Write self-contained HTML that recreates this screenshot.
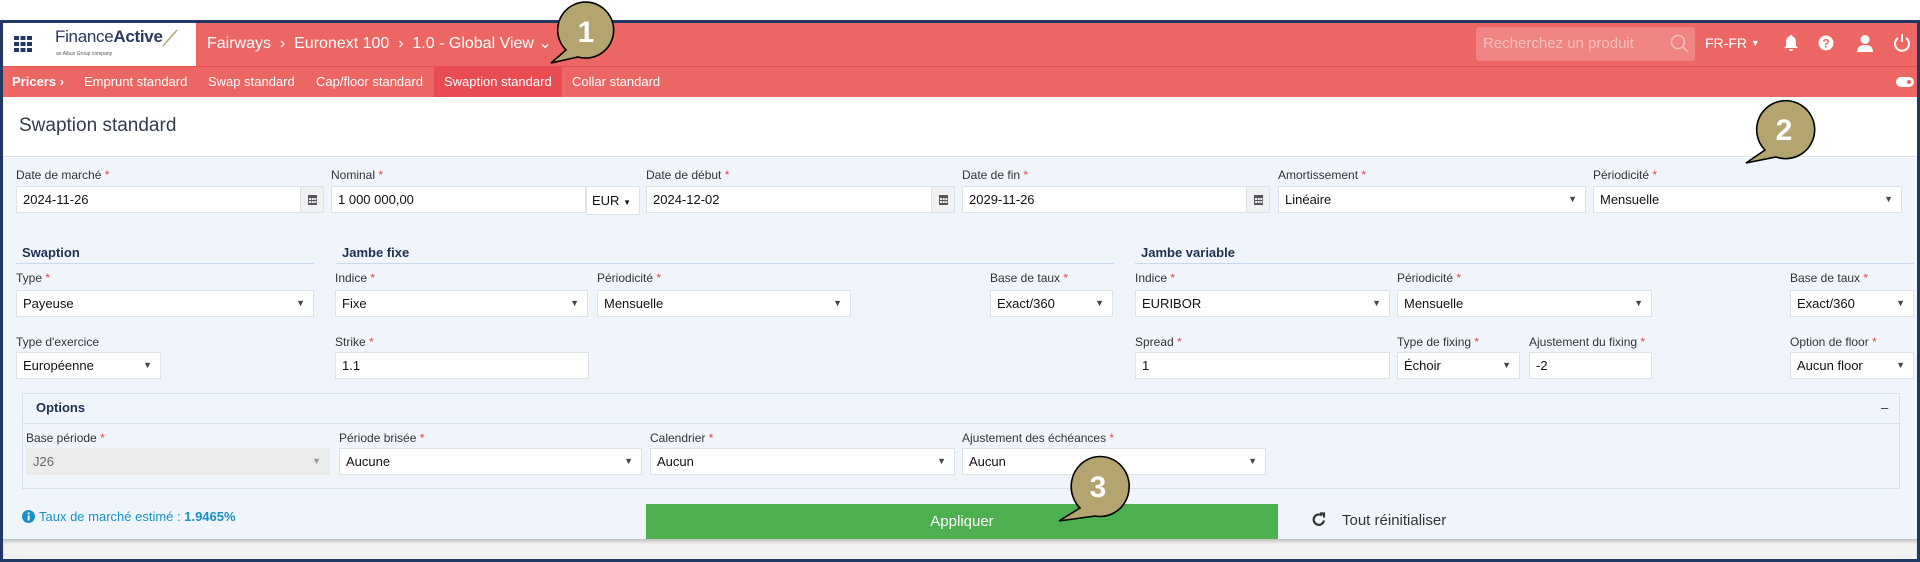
<!DOCTYPE html>
<html><head><meta charset="utf-8"><style>
*{box-sizing:border-box;margin:0;padding:0}
body{width:1920px;height:562px;background:#fff;font-family:"Liberation Sans",Arial,sans-serif;position:relative;overflow:hidden}
.a{position:absolute}
.frame{left:0;top:20px;width:1920px;height:542px;border:3px solid #1f3864;border-top:3px solid #1f3864}
.lbl{position:absolute;font-size:12px;color:#333;white-space:nowrap}
.lbl i{color:#e8474c;font-style:normal}
.inp{position:absolute;height:27px;background:#fff;border:1px solid #dde2e8;font-size:13px;color:#111;padding-left:6px;line-height:25px;white-space:nowrap}
.inp .ar{position:absolute;right:8px;top:0;font-size:9px;color:#444}
.cal{position:absolute;right:0;top:0;width:23px;height:25px;background:#f0f1f3;border-left:1px solid #dde2e8}
.sec{position:absolute;font-size:13px;font-weight:bold;color:#1f3050;border-bottom:1px solid #c9d9ef;padding:0 0 4px 6px;height:19px}
.nav{position:absolute;top:66px;height:31px;line-height:31px;color:#fff;font-size:13px}
</style></head><body>
<!-- header -->
<div class="a" style="left:0;top:21px;width:1920px;height:45px;background:#ec6663"></div>
<div class="a" style="left:3px;top:22px;width:193px;height:44px;background:#fff"></div>
<svg class="a" style="left:14px;top:36px" width="18" height="16"><g fill="#1f3864"><rect x="0" y="0" width="5" height="4"/><rect x="6.5" y="0" width="5" height="4"/><rect x="13" y="0" width="5" height="4"/><rect x="0" y="6" width="5" height="4"/><rect x="6.5" y="6" width="5" height="4"/><rect x="13" y="6" width="5" height="4"/><rect x="0" y="12" width="5" height="4"/><rect x="6.5" y="12" width="5" height="4"/><rect x="13" y="12" width="5" height="4"/></g></svg>
<div class="a" style="left:55px;top:27px;font-size:17px;color:#2a3a5e;letter-spacing:-0.3px">Finance<b>Active</b></div>
<svg class="a" style="left:162px;top:29px" width="16" height="18"><line x1="1" y1="17" x2="15" y2="1" stroke="#b4a46f" stroke-width="1.5"/></svg>
<div class="a" style="left:56px;top:51px;font-size:5px;color:#555">an Aibus Group company</div>
<div class="a" style="left:207px;top:33px;font-size:16px;color:#fff;white-space:nowrap">Fairways&nbsp;&nbsp;›&nbsp;&nbsp;Euronext 100&nbsp;&nbsp;›&nbsp;&nbsp;1.0 - Global View&nbsp;⌄</div>
<div class="a" style="left:1476px;top:27px;width:219px;height:34px;background:#f08482;border-radius:3px"></div>
<div class="a" style="left:1483px;top:35px;font-size:15px;color:#f6c0bf">Recherchez un produit</div>
<svg class="a" style="left:1670px;top:34px" width="20" height="20"><circle cx="8" cy="8" r="6.5" fill="none" stroke="#f6c0bf" stroke-width="1.5"/><line x1="13" y1="13" x2="18" y2="18" stroke="#f6c0bf" stroke-width="1.5"/></svg>
<div class="a" style="left:1705px;top:35px;font-size:14px;color:#fff">FR-FR <span style="font-size:9px;vertical-align:2px">▼</span></div>
<svg class="a" style="left:1783px;top:34px" width="16" height="18" fill="#fff"><path d="M8 1a1.5 1.5 0 0 1 1.5 1.5C12.5 3.3 13 6 13 9v3l2 2H1l2-2V9c0-3 .5-5.7 3.5-6.5A1.5 1.5 0 0 1 8 1zM6 15h4a2 2 0 0 1-4 0z"/></svg>
<svg class="a" style="left:1818px;top:35px" width="16" height="16"><circle cx="8" cy="8" r="7.5" fill="#fff"/><text x="8" y="12.5" font-size="12" font-weight="bold" text-anchor="middle" fill="#ec6663" font-family="Liberation Sans">?</text></svg>
<svg class="a" style="left:1856px;top:34px" width="18" height="18" fill="#fff"><circle cx="9" cy="5.5" r="4.5"/><path d="M1 18c0-5 3-7 8-7s8 2 8 7z"/></svg>
<svg class="a" style="left:1893px;top:33px" width="18" height="19" fill="none" stroke="#fff" stroke-width="2"><path d="M5 5a7 7 0 1 0 8 0"/><line x1="9" y1="1" x2="9" y2="9"/></svg>
<!-- subnav -->
<div class="a" style="left:0;top:66px;width:1920px;height:31px;background:#ec6663;border-top:1px solid #e5504f"></div>
<div class="a" style="left:434px;top:67px;width:128px;height:30px;background:#e84c51"></div>
<div class="nav" style="left:12px;font-weight:bold">Pricers ›</div>
<div class="nav" style="left:84px">Emprunt standard</div>
<div class="nav" style="left:208px">Swap standard</div>
<div class="nav" style="left:316px">Cap/floor standard</div>
<div class="nav" style="left:444px">Swaption standard</div>
<div class="nav" style="left:572px">Collar standard</div>
<div class="a" style="left:1896px;top:77px;width:18px;height:10px;background:#fff;border-radius:5px"><div style="position:absolute;right:3px;top:3px;width:4px;height:4px;border-radius:2px;background:#ec6663"></div></div>
<!-- title -->
<div class="a" style="left:3px;top:97px;width:1914px;height:60px;background:#fff;border-bottom:1px solid #dde3ea"></div>
<div class="a" style="left:19px;top:115px;font-size:19px;color:#333c4e">Swaption standard</div>
<!-- content -->
<div class="a" style="left:3px;top:158px;width:1914px;height:381px;background:#f0f5fc"></div>
<div class="a" style="left:3px;top:539px;width:1914px;height:20px;background:#f2f2f2;box-shadow:inset 0 4px 4px -2px rgba(0,0,0,.25)"></div>

<div class="lbl" style="left:16px;top:168px">Date de marché <i>*</i></div>
<div class="inp" style="left:16px;top:186px;width:308px">2024-11-26<div class="cal"><svg width="23" height="25"><g fill="#555"><rect x="7" y="8" width="9" height="10"/></g><g fill="#f0f1f3"><rect x="8" y="11" width="2" height="2"/><rect x="10.7" y="11" width="2" height="2"/><rect x="13.3" y="11" width="2" height="2"/><rect x="8" y="14" width="2" height="2"/><rect x="10.7" y="14" width="2" height="2"/><rect x="13.3" y="14" width="2" height="2"/></g></svg></div></div>
<div class="lbl" style="left:331px;top:168px">Nominal <i>*</i></div>
<div class="inp" style="left:331px;top:186px;width:255px">1 000 000,00</div>
<div class="inp" style="left:586px;top:186px;width:54px;height:29px;line-height:28px;padding-left:5px">EUR <span style="font-size:8px">▼</span></div>
<div class="lbl" style="left:646px;top:168px">Date de début <i>*</i></div>
<div class="inp" style="left:646px;top:186px;width:309px">2024-12-02<div class="cal"><svg width="23" height="25"><g fill="#555"><rect x="7" y="8" width="9" height="10"/></g><g fill="#f0f1f3"><rect x="8" y="11" width="2" height="2"/><rect x="10.7" y="11" width="2" height="2"/><rect x="13.3" y="11" width="2" height="2"/><rect x="8" y="14" width="2" height="2"/><rect x="10.7" y="14" width="2" height="2"/><rect x="13.3" y="14" width="2" height="2"/></g></svg></div></div>
<div class="lbl" style="left:962px;top:168px">Date de fin <i>*</i></div>
<div class="inp" style="left:962px;top:186px;width:308px">2029-11-26<div class="cal"><svg width="23" height="25"><g fill="#555"><rect x="7" y="8" width="9" height="10"/></g><g fill="#f0f1f3"><rect x="8" y="11" width="2" height="2"/><rect x="10.7" y="11" width="2" height="2"/><rect x="13.3" y="11" width="2" height="2"/><rect x="8" y="14" width="2" height="2"/><rect x="10.7" y="14" width="2" height="2"/><rect x="13.3" y="14" width="2" height="2"/></g></svg></div></div>
<div class="lbl" style="left:1278px;top:168px">Amortissement <i>*</i></div>
<div class="inp" style="left:1278px;top:186px;width:308px">Linéaire<span class="ar">▼</span></div>
<div class="lbl" style="left:1593px;top:168px">Périodicité <i>*</i></div>
<div class="inp" style="left:1593px;top:186px;width:309px">Mensuelle<span class="ar">▼</span></div>

<div class="sec" style="left:16px;top:245px;width:298px">Swaption</div>
<div class="sec" style="left:336px;top:245px;width:778px">Jambe fixe</div>
<div class="sec" style="left:1135px;top:245px;width:779px">Jambe variable</div>

<div class="lbl" style="left:16px;top:271px">Type <i>*</i></div>
<div class="inp" style="left:16px;top:290px;width:298px">Payeuse<span class="ar">▼</span></div>
<div class="lbl" style="left:335px;top:271px">Indice <i>*</i></div>
<div class="inp" style="left:335px;top:290px;width:253px">Fixe<span class="ar">▼</span></div>
<div class="lbl" style="left:597px;top:271px">Périodicité <i>*</i></div>
<div class="inp" style="left:597px;top:290px;width:254px">Mensuelle<span class="ar">▼</span></div>
<div class="lbl" style="left:990px;top:271px">Base de taux <i>*</i></div>
<div class="inp" style="left:990px;top:290px;width:123px">Exact/360<span class="ar">▼</span></div>
<div class="lbl" style="left:1135px;top:271px">Indice <i>*</i></div>
<div class="inp" style="left:1135px;top:290px;width:255px">EURIBOR<span class="ar">▼</span></div>
<div class="lbl" style="left:1397px;top:271px">Périodicité <i>*</i></div>
<div class="inp" style="left:1397px;top:290px;width:255px">Mensuelle<span class="ar">▼</span></div>
<div class="lbl" style="left:1790px;top:271px">Base de taux <i>*</i></div>
<div class="inp" style="left:1790px;top:290px;width:124px">Exact/360<span class="ar">▼</span></div>

<div class="lbl" style="left:16px;top:335px">Type d'exercice</div>
<div class="inp" style="left:16px;top:352px;width:145px">Européenne<span class="ar">▼</span></div>
<div class="lbl" style="left:335px;top:335px">Strike <i>*</i></div>
<div class="inp" style="left:335px;top:352px;width:254px">1.1</div>
<div class="lbl" style="left:1135px;top:335px">Spread <i>*</i></div>
<div class="inp" style="left:1135px;top:352px;width:255px">1</div>
<div class="lbl" style="left:1397px;top:335px">Type de fixing <i>*</i></div>
<div class="inp" style="left:1397px;top:352px;width:123px">Échoir<span class="ar">▼</span></div>
<div class="lbl" style="left:1529px;top:335px">Ajustement du fixing <i>*</i></div>
<div class="inp" style="left:1529px;top:352px;width:123px">-2</div>
<div class="lbl" style="left:1790px;top:335px">Option de floor <i>*</i></div>
<div class="inp" style="left:1790px;top:352px;width:124px">Aucun floor<span class="ar">▼</span></div>

<div class="a" style="left:22px;top:393px;width:1878px;height:96px;border:1px solid #d6e2f0"></div>
<div class="a" style="left:23px;top:423px;width:1876px;height:1px;background:#d6e2f0"></div>
<div class="a" style="left:36px;top:400px;font-size:13px;font-weight:bold;color:#1f3050">Options</div>
<div class="a" style="left:1881px;top:400px;font-size:13px;color:#333">–</div>
<div class="lbl" style="left:26px;top:431px">Base période <i>*</i></div>
<div class="inp" style="left:26px;top:448px;width:304px;background:#ebebeb;border-color:#ebebeb;color:#666">J26<span class="ar" style="color:#999">▼</span></div>
<div class="lbl" style="left:339px;top:431px">Période brisée <i>*</i></div>
<div class="inp" style="left:339px;top:448px;width:303px">Aucune<span class="ar">▼</span></div>
<div class="lbl" style="left:650px;top:431px">Calendrier <i>*</i></div>
<div class="inp" style="left:650px;top:448px;width:305px">Aucun<span class="ar">▼</span></div>
<div class="lbl" style="left:962px;top:431px">Ajustement des échéances <i>*</i></div>
<div class="inp" style="left:962px;top:448px;width:304px">Aucun<span class="ar">▼</span></div>

<svg class="a" style="left:22px;top:510px" width="13" height="13"><circle cx="6.5" cy="6.5" r="6.5" fill="#1a8fc8"/><rect x="5.7" y="5.5" width="1.8" height="5" fill="#fff"/><rect x="5.7" y="2.5" width="1.8" height="1.8" fill="#fff"/></svg>
<div class="a" style="left:39px;top:509px;font-size:13px;color:#1a8fc8">Taux de marché estimé : <b>1.9465%</b></div>
<div class="a" style="left:646px;top:504px;width:632px;height:35px;background:#4caf50;color:#fff;font-size:15px;text-align:center;line-height:35px">Appliquer</div>
<svg class="a" style="left:1311px;top:512px" width="16" height="16" fill="none" stroke="#333" stroke-width="2.2"><path d="M13 8.5A5.2 5.2 0 1 1 11 3.5"/><path d="M9 1.5h4v4" /></svg>
<div class="a" style="left:1342px;top:512px;font-size:15px;color:#333">Tout réinitialiser</div>

<div class="a frame" style="background:transparent"></div>

<!-- callouts -->
<svg class="a" style="left:0;top:0" width="1920" height="562">
<g stroke="#000" stroke-width="1.6" fill="#b4a46f">
<path d="M566 50 L551 63 L578 57 A28 28 0 1 0 566 50 Z"/>
<path d="M1765 150 L1746 163 L1776 157 A29 29 0 1 0 1765 150 Z"/>
<path d="M1080 508 L1059 521 L1095 516 A29 30 0 1 0 1080 508 Z"/>
</g>
<g fill="#fff" font-family="Liberation Sans" font-weight="bold" font-size="30" text-anchor="middle">
<text x="586" y="42">1</text><text x="1784" y="140">2</text><text x="1098" y="497">3</text>
</g>
</svg>
</body></html>
